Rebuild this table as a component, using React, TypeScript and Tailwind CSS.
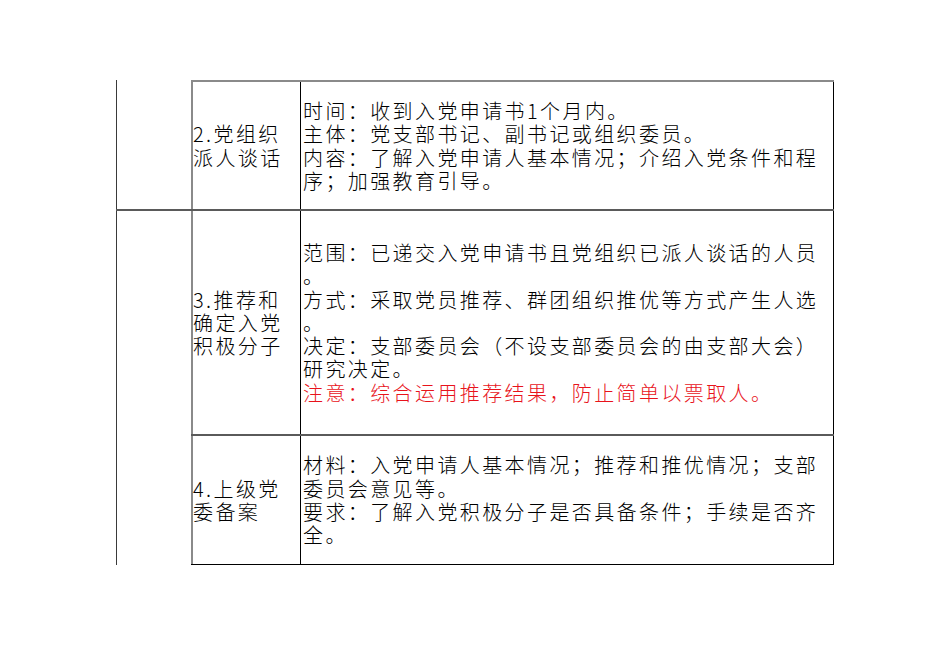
import React from "react";

const font = {
  fontFamily: '"Noto Sans CJK SC", "Noto Sans", sans-serif',
};

function Lines({ lines, red }: { lines: string[]; red?: number[] }) {
  return (
    <div className="flex flex-col">
      {lines.map((l, i) => (
        <div
          key={i}
          className={
            "whitespace-nowrap text-[20px] font-light leading-[23.3px] tracking-[2.4px] " +
            (red && red.includes(i) ? "text-[#e8131b]" : "text-black")
          }
        >
          {l}
        </div>
      ))}
    </div>
  );
}

function Row({
  label,
  content,
  red,
  h,
  bottom,
}: {
  label: string[];
  content: string[];
  red?: number[];
  h: string;
  bottom: string;
}) {
  return (
    <div className={"flex " + h + " " + bottom}>
      <div className="w-[109px] shrink-0 border-l-2 border-[#8a8a8a] flex items-center">
        <Lines lines={label} />
      </div>
      <div className="w-[534px] shrink-0 border-l border-r border-black flex items-center pl-[2px]">
        <Lines lines={content} red={red} />
      </div>
    </div>
  );
}

export default function App() {
  return (
    <div className="w-[950px] h-[672px] bg-white pt-[80px] pl-[116px]" style={font}>
      <div className="flex flex-col w-[718px]">
        {/* group 1 */}
        <div className="flex border-b-2 border-[#5a5a5a]">
          <div className="w-[75px] shrink-0 border-l border-[#3a3a3a]" />
          <div className="flex flex-col border-t-2 border-[#8a8a8a]">
            <Row
              label={["2.党组织", "派人谈话"]}
              content={[
                "时间：收到入党申请书1个月内。",
                "主体：党支部书记、副书记或组织委员。",
                "内容：了解入党申请人基本情况；介绍入党条件和程",
                "序；加强教育引导。",
              ]}
              h="h-[127px]"
              bottom=""
            />
          </div>
        </div>
        {/* group 2 */}
        <div className="flex">
          <div className="w-[75px] shrink-0 border-l border-[#3a3a3a]" />
          <div className="flex flex-col">
            <Row
              label={["3.推荐和", "确定入党", "积极分子"]}
              content={[
                "范围：已递交入党申请书且党组织已派人谈话的人员",
                "。",
                "方式：采取党员推荐、群团组织推优等方式产生人选",
                "。",
                "决定：支部委员会（不设支部委员会的由支部大会）",
                "研究决定。",
                "注意：综合运用推荐结果，防止简单以票取人。",
              ]}
              red={[6]}
              h="h-[225px]"
              bottom="border-b-2 border-[#5a5a5a]"
            />
            <Row
              label={["4.上级党", "委备案"]}
              content={[
                "材料：入党申请人基本情况；推荐和推优情况；支部",
                "委员会意见等。",
                "要求：了解入党积极分子是否具备条件；手续是否齐",
                "全。",
              ]}
              h="h-[129px]"
              bottom="border-b border-black"
            />
          </div>
        </div>
      </div>
    </div>
  );
}
